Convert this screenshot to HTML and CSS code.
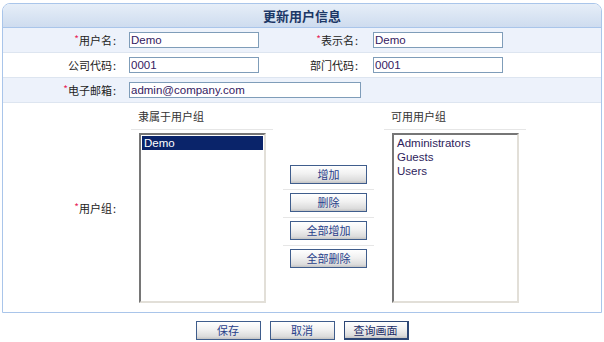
FILE: index.html
```html
<!DOCTYPE html>
<html lang="zh-CN">
<head>
    <meta charset="UTF-8">
    <title>更新用户信息</title>
    <link rel="stylesheet" href="styles.css">
</head>
<body>
    <div class="panel">
        <div class="panel-head">更新用户信息</div>

        <div class="form-row shaded">
            <label class="field-label"><span class="req">*</span>用户名<span class="colon">:</span></label>
            <div class="field"><input type="text" class="text-input" value="Demo"></div>
            <label class="field-label"><span class="req">*</span>表示名<span class="colon">:</span></label>
            <div class="field field-right"><input type="text" class="text-input" value="Demo"></div>
        </div>

        <div class="form-row">
            <label class="field-label">公司代码<span class="colon">:</span></label>
            <div class="field"><input type="text" class="text-input" value="0001"></div>
            <label class="field-label">部门代码<span class="colon">:</span></label>
            <div class="field field-right"><input type="text" class="text-input" value="0001"></div>
        </div>

        <div class="form-row shaded">
            <label class="field-label"><span class="req">*</span>电子邮箱<span class="colon">:</span></label>
            <div class="field field-wide"><input type="text" class="text-input email" value="admin@company.com"></div>
        </div>

        <div class="form-row groups-row">
            <label class="field-label"><span class="req">*</span>用户组<span class="colon">:</span></label>
            <div class="groups">
                <div class="group-head">隶属于用户组</div>
                <div class="group-head blank"></div>
                <div class="group-head">可用用户组</div>

                <div class="group-cell">
                    <div class="listbox">
                        <div class="list-item selected">Demo</div>
                    </div>
                </div>
                <div class="move-buttons">
                    <div class="move-item"><button class="btn btn-move">增加</button></div>
                    <div class="move-item"><button class="btn btn-move">删除</button></div>
                    <div class="move-item"><button class="btn btn-move">全部增加</button></div>
                    <div class="move-item last"><button class="btn btn-move">全部删除</button></div>
                </div>
                <div class="group-cell">
                    <div class="listbox">
                        <div class="list-item">Administrators</div>
                        <div class="list-item">Guests</div>
                        <div class="list-item">Users</div>
                    </div>
                </div>
            </div>
        </div>
    </div>

    <div class="actions">
        <button class="btn btn-action">保存</button>
        <button class="btn btn-action">取消</button>
        <button class="btn btn-action focused">查询画面</button>
    </div>
</body>
</html>
```

FILE: styles.css
```css
body {
    margin: 0;
    font-family: 'Liberation Sans', 'Noto Sans CJK SC', sans-serif;
    font-size: 12px;
    color: #222;
    background-color: #fff;
}
.panel {
    box-sizing: border-box;
    width: 600px;
    margin: 3px 2px 0 2px;
    border: 1px solid #a9c5ea;
    border-radius: 8px 8px 0 0;
    overflow: hidden;
}
.panel-head {
    height: 23px;
    line-height: 23px;
    text-align: center;
    font-family: 'Noto Sans CJK SC', sans-serif;
    font-size: 13px;
    font-weight: bold;
    color: #1c3766;
    background: linear-gradient(to bottom, #e6eef8, #cedcef);
    border-bottom: 1px solid #a9c5ea;
}
.form-row {
    display: grid;
    grid-template-columns: 120px 140px 102px 1fr;
    align-items: center;
    height: 24px;
    border-bottom: 1px solid #dde5f0;
    background-color: #fff;
}
.form-row.shaded {
    background-color: #edf2fb;
}
.field-label {
    text-align: right;
    padding-right: 7px;
    font-family: 'Noto Sans CJK SC', sans-serif;
    font-size: 11px;
    color: #222;
}
.colon {
    margin-left: 1px;
}
.req {
    color: #e8265a;
    font-size: 10px;
    position: relative;
    top: -2px;
}
.field {
    padding-left: 6px;
}
.field-right {
    padding-left: 8px;
}
.field-wide {
    grid-column: 2 / 5;
}
.text-input {
    box-sizing: border-box;
    width: 130px;
    height: 16px;
    padding: 0 1px;
    margin: 0;
    border: 1px solid #7f9db9;
    font-family: 'Liberation Sans', sans-serif;
    font-size: 11.5px;
    color: #35205f;
    background-color: #fff;
    outline: none;
}
.text-input.email {
    width: 232px;
}
.groups-row {
    height: auto;
    align-items: center;
    border-bottom: none;
}
.groups {
    grid-column: 2 / 5;
    display: grid;
    grid-template-columns: 142px 91px 142px;
    column-gap: 10px;
    margin: 6px 0 9px 8px;
}
.group-head {
    height: 14px;
    line-height: 14px;
    padding: 0 0 6px 7px;
    border-bottom: 1px solid #e6e6e6;
    font-family: 'Noto Sans CJK SC', sans-serif;
    font-size: 11px;
    color: #333;
}
.group-head.blank {
    border-bottom: none;
}
.group-cell {
    padding: 3px 0 0 8px;
}
.listbox {
    box-sizing: border-box;
    width: 127px;
    height: 170px;
    padding: 1px;
    border-top: 2px solid #767676;
    border-left: 2px solid #767676;
    border-right: 2px solid #e2dfd8;
    border-bottom: 2px solid #e2dfd8;
    background-color: #fff;
}
.list-item {
    height: 14px;
    line-height: 14px;
    padding-left: 2px;
    font-size: 11.5px;
    color: #2e1d5c;
}
.list-item.selected {
    background-color: #0a246a;
    color: #fff;
}
.move-buttons {
    padding-top: 32px;
}
.move-item {
    padding: 3px 0 5px 0;
    border-bottom: 1px solid #e6e6e6;
    text-align: center;
}
.move-item.last {
    border-bottom: none;
}
.btn {
    box-sizing: border-box;
    height: 19px;
    padding: 0;
    border: 1px solid #3f5d8c;
    background: linear-gradient(to bottom, #ffffff 0%, #f1f1f1 45%, #dcdcdc 85%, #c4c4c4 100%);
    font-family: 'Noto Sans CJK SC', sans-serif;
    font-size: 11px;
    line-height: 17px;
    color: #28408a;
    cursor: pointer;
}
.btn-move {
    width: 77px;
}
.actions {
    display: flex;
    justify-content: center;
    gap: 9px;
    margin-top: 8px;
}
.btn-action {
    width: 65px;
}
.btn-action.focused {
    border-color: #2c4675;
    border-right-width: 2px;
    border-bottom-width: 2px;
    color: #1b2d66;
}
```
